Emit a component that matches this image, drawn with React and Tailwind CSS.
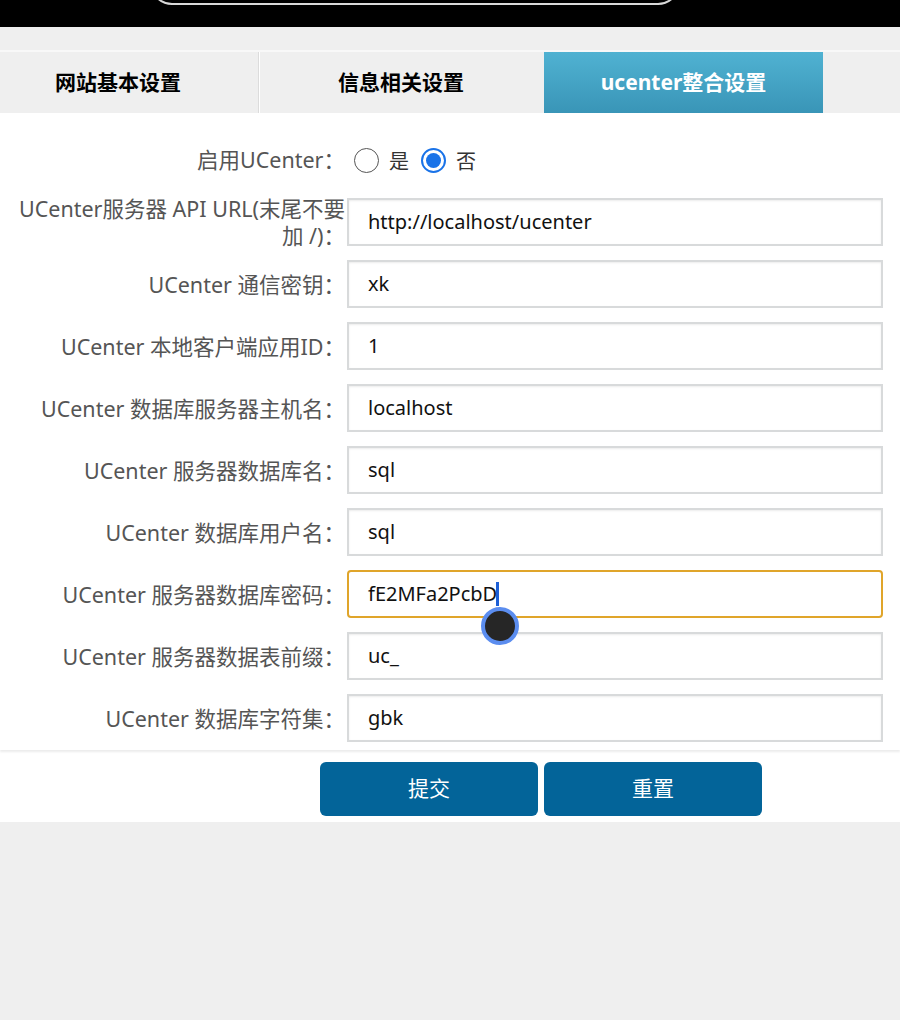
const rows = [
  { label: ["UCenter服务器 API URL(末尾不要", "加 /)："], value: "http://localhost/ucenter" },
  { label: ["UCenter 通信密钥："], value: "xk" },
  { label: ["UCenter 本地客户端应用ID："], value: "1" },
  { label: ["UCenter 数据库服务器主机名："], value: "localhost" },
  { label: ["UCenter 服务器数据库名："], value: "sql" },
  { label: ["UCenter 数据库用户名："], value: "sql" },
  { label: ["UCenter 服务器数据库密码："], value: "fE2MFa2PcbD", focused: true },
  { label: ["UCenter 服务器数据表前缀："], value: "uc_" },
  { label: ["UCenter 数据库字符集："], value: "gbk" },
];

const font = { fontFamily: '"Noto Sans", "Noto Sans CJK SC", sans-serif' };

function Field({ label, value, focused }) {
  return (
    <div className="flex items-center h-[48px]">
      <div className="w-[345px] shrink-0 text-right text-[21.5px] leading-[27px] text-[#555] whitespace-nowrap">
        {label.map((l) => (
          <div key={l}>{l}</div>
        ))}
      </div>
      <div
        className={
          "relative ml-[2px] w-[536px] h-[48px] flex items-center pl-[19px] text-[20px] text-[#111] bg-white " +
          (focused
            ? "border-2 border-[#e0a52a] rounded-[4px]"
            : "border-2 border-[#d8dadb] shadow-[inset_0_1px_2px_rgba(0,0,0,0.08)]")
        }
      >
        <span>{value}</span>
        {focused && (
          <>
            <span className="w-[3px] h-[24px] bg-[#1d5fd6] ml-[-1px]" />
            <span className="absolute left-[132px] top-[35px] w-[38px] h-[38px] rounded-full bg-[#262626] border-[4px] border-[#5b8def] z-10" />
          </>
        )}
      </div>
    </div>
  );
}

function Radio({ checked }) {
  return checked ? (
    <span className="w-[25px] h-[25px] rounded-full border-2 border-[#1a73e8] flex items-center justify-center">
      <span className="w-[15px] h-[15px] rounded-full bg-[#1a73e8]" />
    </span>
  ) : (
    <span className="w-[25px] h-[25px] rounded-full border-[1.5px] border-[#555]" />
  );
}

export default function App() {
  return (
    <div className="w-[900px] h-[1020px] bg-[#efefef] overflow-hidden" style={font}>
      <div className="h-[27px] bg-black flex justify-start overflow-hidden">
        <div className="ml-[150px] mt-[-30px] w-[530px] h-[35px] rounded-b-[22px] border-2 border-[#d8d8d8]" />
      </div>
      <div className="h-[25px] bg-[#efefef] border-b-2 border-[#f8f8f8]" />
      <div className="flex h-[61px] text-[21px] font-bold">
        <div className="w-[259px] flex items-center justify-center bg-[#efefef] border-r border-[#dcdcdc]">
          <span className="ml-[-22px]">网站基本设置</span>
        </div>
        <div className="w-[285px] flex items-center justify-center bg-[#efefef] border-l border-white">
          <span className="ml-[-2px]">信息相关设置</span>
        </div>
        <div className="w-[279px] flex items-center justify-center text-white bg-gradient-to-b from-[#50b2d2] to-[#3995b7]">
          ucenter整合设置
        </div>
        <div className="flex-1 bg-[#efefef]" />
      </div>
      <div className="bg-white pt-[23px] pb-[8px] flex flex-col gap-[14px] shadow-[0_2px_2px_rgba(0,0,0,0.08)] relative z-[1]">
        <div className="flex items-center h-[48px]">
          <div className="w-[345px] text-right text-[21.5px] text-[#555]">启用UCenter：</div>
          <div className="flex items-center ml-[9px] text-[20px] text-[#333]">
            <Radio />
            <span className="ml-[10px] mt-[4px]">是</span>
            <span className="ml-[12px]"><Radio checked /></span>
            <span className="ml-[10px] mt-[4px]">否</span>
          </div>
        </div>
        {rows.map((r) => (
          <Field key={r.label[0]} {...r} />
        ))}
      </div>
      <div className="bg-white pt-[12px] pb-[6px] pl-[320px] flex gap-[6px]">
        <button className="w-[218px] h-[54px] rounded-[6px] bg-[#036499] text-white text-[21px]">提交</button>
        <button className="w-[218px] h-[54px] rounded-[6px] bg-[#036499] text-white text-[21px]">重置</button>
      </div>
    </div>
  );
}
